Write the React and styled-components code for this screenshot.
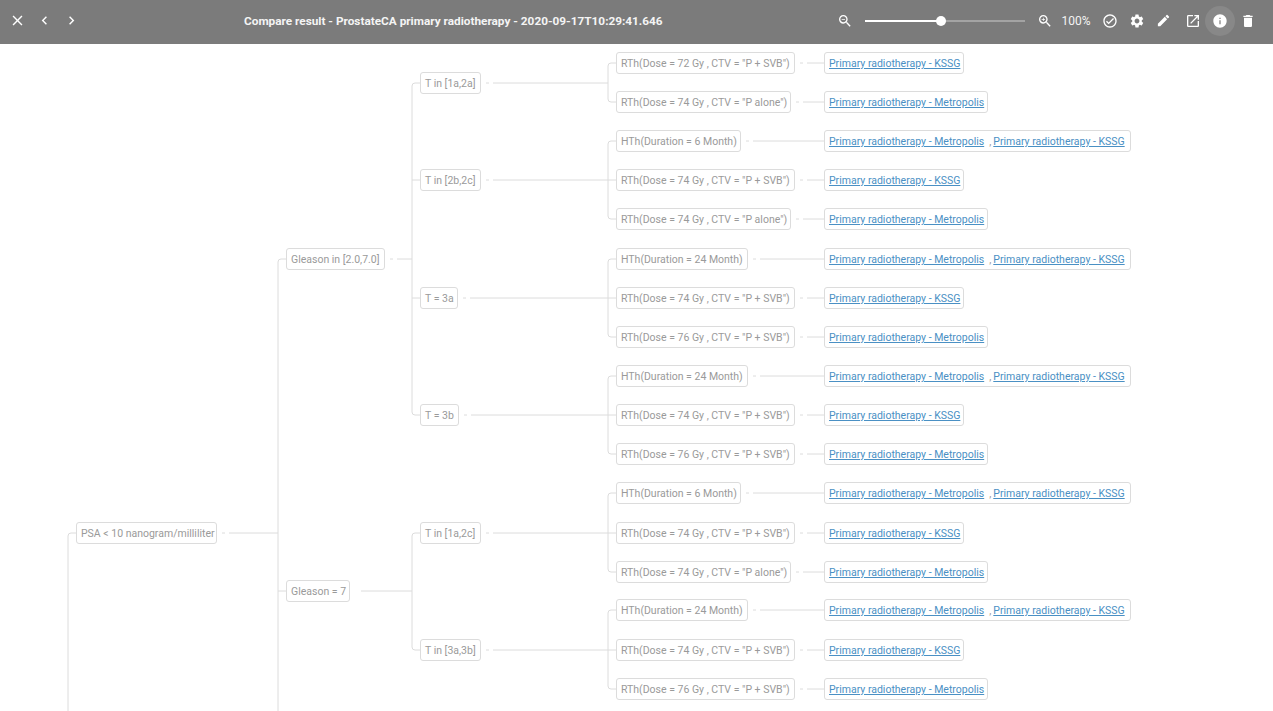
import React from "react";
import styled, { createGlobalStyle } from "styled-components";
import {
  MdClose, MdChevronLeft, MdChevronRight, MdZoomOut, MdZoomIn, MdOutlineCheckCircle,
  MdSettings, MdEdit, MdOpenInNew, MdInfo, MdDelete,
} from "react-icons/md";

const Global = createGlobalStyle`
  html, body { margin: 0; padding: 0; height: 100%; background: #fff; overflow: hidden; }
  body { font-family: Roboto, "Liberation Sans", sans-serif; }
`;
const Page = styled.div`
  width: 1273px; height: 711px; display: flex; flex-direction: column; overflow: hidden;
`;
const Toolbar = styled.header`
  box-sizing: border-box; height: 44px; padding-bottom: 3px; flex: none; background: #7b7b7b; color: #fff; display: grid;
  grid-template-columns: 235px 1fr auto; align-items: center;
`;
const NavGroup = styled.div`display: flex; align-items: center; padding-left: 4px;`;
const ToolBtn = styled.button`
  width: ${p => p.$w || 27}px; height: 30px; flex: none; border: 0; padding: 0;
  margin-left: ${p => p.$ml || 0}px;
  background: ${p => p.$active ? "rgba(255,255,255,.1)" : "transparent"};
  border-radius: ${p => p.$active ? "50%" : "0"}; color: #fff; display: flex; align-items: center; justify-content: center;
`;
const Title = styled.h1`
  margin: 0 0 0 9px; font-size: 11.8px; line-height: 30px; font-weight: 700; white-space: nowrap; color: #f4f4f4;
`;
const Tools = styled.div`display: flex; align-items: center; padding-right: 12.5px;`;
const Slider = styled.div`
  width: 160px; height: 2px; margin: 0 8px; background: rgba(255,255,255,.3); position: relative;
`;
const SliderFill = styled.div`height: 100%; background: #fff;`;
const Thumb = styled.span`
  position: absolute; top: -4px; width: 10px; height: 10px; border-radius: 50%; background: #fff; transform: translateX(-5px);
`;
const Percent = styled.span`font-size: 12px; width: 30px; text-align: center; margin: 0 5px 0 4.5px; color: #f4f4f4;`;

const Canvas = styled.main`position: relative; flex: 1; overflow: hidden;`;
const Lines = styled.svg`position: absolute; inset: 0; width: 100%; height: 100%;`;
const Node = styled.div.attrs(p => ({ style: { left: p.$x, top: p.$y - 44 - 11, width: p.$w } }))`
  position: absolute; box-sizing: border-box; height: 22px; padding: 0 4px; border: 1px solid #dcdcdc; border-radius: 3px;
  background: #fff; color: #9a9a9a; font-size: 10.5px; line-height: 22px; white-space: nowrap;
`;
const Leaf = styled(Node)`color: #888;`;
const StudyLink = styled.a`color: #4a90c4; text-decoration: underline; font-size: 10.5px;`;
const Sep = styled.span`margin: 0 2px 0 5px; color: #999;`;

const K = "Primary radiotherapy - KSSG";
const M = "Primary radiotherapy - Metropolis";
const r = (dose, ctv, y, w, links) => ({ y, w, text: `RTh(Dose = ${dose} Gy , CTV = "${ctv}")`, links });
const h = (d, y, w) => ({ y, w, text: `HTh(Duration = ${d} Month)`, links: [M, K] });
const tree = {
  x: 76, y: 533, w: 141, text: "PSA < 10 nanogram/milliliter", stem: true,
  children: [
    { x: 286, y: 259, w: 99, text: "Gleason in [2.0,7.0]", children: [
      { x: 420, y: 83, w: 61, text: "T in [1a,2a]", children: [
        r(72, "P + SVB", 63, 179, [K]), r(74, "P alone", 102, 175, [M]) ] },
      { x: 420, y: 180, w: 61, text: "T in [2b,2c]", children: [
        h(6, 141, 125), r(74, "P + SVB", 180, 179, [K]), r(74, "P alone", 219, 175, [M]) ] },
      { x: 420, y: 298, w: 38, text: "T = 3a", children: [
        h(24, 259, 132), r(74, "P + SVB", 298, 179, [K]), r(76, "P + SVB", 337, 179, [M]) ] },
      { x: 420, y: 415, w: 39, text: "T = 3b", children: [
        h(24, 376, 132), r(74, "P + SVB", 415, 179, [K]), r(76, "P + SVB", 454, 179, [M]) ] },
    ] },
    { x: 286, y: 591, w: 64, text: "Gleason = 7", plain: true, children: [
      { x: 420, y: 533, w: 61, text: "T in [1a,2c]", children: [
        h(6, 493, 125), r(74, "P + SVB", 533, 179, [K]), r(74, "P alone", 572, 175, [M]) ] },
      { x: 420, y: 650, w: 61, text: "T in [3a,3b]", children: [
        h(24, 610, 132), r(74, "P + SVB", 650, 179, [K]), r(76, "P + SVB", 689, 179, [M]) ] },
    ] },
  ],
};

const LEAF_X = 616, LINK_X = 824;
const leafW = links => (links.length === 2 ? 307 : links[0] === K ? 140 : 164);

function collect(n, nodes, segs) {
  const x = n.x ?? LEAF_X;
  nodes.push({ ...n, x });
  const right = x + n.w;
  const kids = n.children || [];
  const Y = n.y - 44;
  if (n.links) {
    nodes.push({ x: LINK_X, y: n.y, w: leafW(n.links), links: n.links, isLeaf: true });
    segs.push(`M${right + 5} ${Y}h3M${right + 12} ${Y}H${LINK_X}`);
    return;
  }
  const vx = kids[0].x ? kids[0].x - 8 : LEAF_X - 8;
  if (n.plain) segs.push(`M${right + 11} ${Y}H${vx}`);
  else segs.push(`M${right + 5} ${Y}h3M${right + 12} ${Y}H${vx}`);
  const first = kids[0].y - 44, last = kids[kids.length - 1].y - 44;
  const extend = n.x === 76;
  segs.push(`M${vx + 8} ${first}H${vx + 3}Q${vx} ${first} ${vx} ${first + 3}V${extend ? 700 : last - 3}${extend ? "" : `Q${vx} ${last} ${vx + 3} ${last}H${vx + 8}`}`);
  kids.slice(1, extend ? undefined : -1).forEach(k => segs.push(`M${vx} ${k.y - 44}H${vx + 8}`));
  kids.forEach(k => collect(k, nodes, segs));
}

export default function App() {
  const nodes = [], segs = [];
  collect(tree, nodes, segs);
  segs.push("M76 489H71Q68 489 68 492V700");
  return (
    <Page>
      <Global />
      <Toolbar>
        <NavGroup>
          <ToolBtn><MdClose size={17} /></ToolBtn>
          <ToolBtn><MdChevronLeft size={17} /></ToolBtn>
          <ToolBtn><MdChevronRight size={17} /></ToolBtn>
        </NavGroup>
        <Title>Compare result - ProstateCA primary radiotherapy - 2020-09-17T10:29:41.646</Title>
        <Tools>
          <ToolBtn $w={24}><MdZoomOut size={16} /></ToolBtn>
          <Slider><SliderFill style={{ width: "48%" }} /><Thumb style={{ left: "48%" }} /></Slider>
          <ToolBtn $w={24}><MdZoomIn size={16} /></ToolBtn>
          <Percent>100%</Percent>
          <ToolBtn><MdOutlineCheckCircle size={16} /></ToolBtn>
          <ToolBtn><MdSettings size={16} /></ToolBtn>
          <ToolBtn><MdEdit size={15} /></ToolBtn>
          <ToolBtn $ml={2}><MdOpenInNew size={16} /></ToolBtn>
          <ToolBtn $w={30} $ml={-1.5} $active><MdInfo size={16} /></ToolBtn>
          <ToolBtn $w={26}><MdDelete size={16} /></ToolBtn>
        </Tools>
      </Toolbar>
      <Canvas>
        <Lines>
          <path d={segs.join("")} fill="none" stroke="#dcdcdc" strokeWidth="1" />
        </Lines>
        {nodes.map((n, i) => n.isLeaf ? (
          <Leaf key={i} $x={n.x} $y={n.y} $w={n.w}>
            {n.links.map((l, j) => (
              <React.Fragment key={j}>
                {j > 0 && <Sep>,</Sep>}
                <StudyLink href="#">{l}</StudyLink>
              </React.Fragment>
            ))}
          </Leaf>
        ) : (
          <Node key={i} $x={n.x} $y={n.y} $w={n.w}>{n.text}</Node>
        ))}
      </Canvas>
    </Page>
  );
}
